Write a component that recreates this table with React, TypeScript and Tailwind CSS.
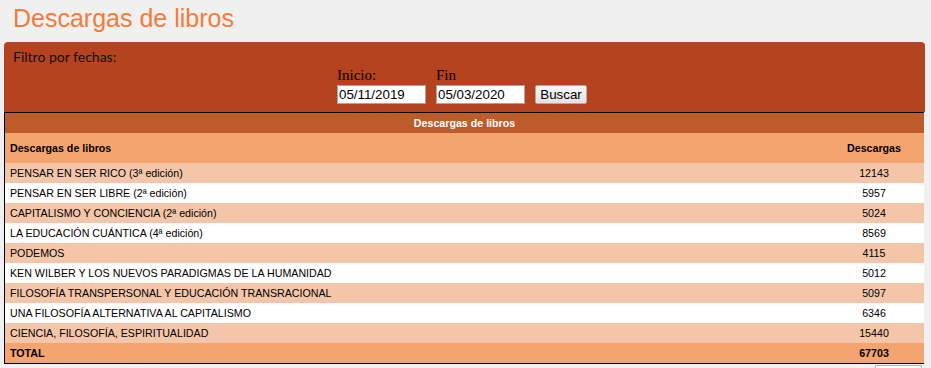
const libros: [string, number][] = [
  ['PENSAR EN SER RICO (3ª edición)', 12143],
  ['PENSAR EN SER LIBRE (2ª edición)', 5957],
  ['CAPITALISMO Y CONCIENCIA (2ª edición)', 5024],
  ['LA EDUCACIÓN CUÁNTICA (4ª edición)', 8569],
  ['PODEMOS', 4115],
  ['KEN WILBER Y LOS NUEVOS PARADIGMAS DE LA HUMANIDAD', 5012],
  ['FILOSOFÍA TRANSPERSONAL Y EDUCACIÓN TRANSRACIONAL', 5097],
  ['UNA FILOSOFÍA ALTERNATIVA AL CAPITALISMO', 6346],
  ['CIENCIA, FILOSOFÍA, ESPIRITUALIDAD', 15440],
];

function FiltroFechas() {
  return (
    <div className="w-[921px] ml-[4px] rounded-t-[4px] bg-[#b5431f] pt-[6px] pb-[8px]">
      <div className="pl-[9px] font-['Lato',sans-serif] text-[14px] leading-[17px] text-[#111]">
        Filtro por fechas:
      </div>
      <div className="mt-[2px] flex items-end justify-center gap-[10px] pr-[5px]">
        <div className="flex flex-col">
          <label className="font-['Liberation_Serif','Times_New_Roman',serif] text-[15px] leading-[17px] text-black">
            Inicio:
          </label>
          <input
            defaultValue="05/11/2019"
            className="mt-[1px] h-[19px] w-[89px] border border-[#a5a5a5] bg-white px-[1px] font-['Liberation_Sans',Arial,sans-serif] text-[13.33px] text-black outline-none"
          />
        </div>
        <div className="flex flex-col">
          <label className="font-['Liberation_Serif','Times_New_Roman',serif] text-[15px] leading-[17px] text-black">
            Fin
          </label>
          <input
            defaultValue="05/03/2020"
            className="mt-[1px] h-[19px] w-[89px] border border-[#a5a5a5] bg-white px-[1px] font-['Liberation_Sans',Arial,sans-serif] text-[13.33px] text-black outline-none"
          />
        </div>
        <button
          type="button"
          className="h-[19px] w-[52px] rounded-[2px] border border-[#adadad] bg-gradient-to-b from-[#f6f6f6] to-[#e3e3e3] font-['Liberation_Sans',Arial,sans-serif] text-[13.33px] leading-none text-black"
        >
          Buscar
        </button>
      </div>
    </div>
  );
}

function TablaDescargas() {
  return (
    <div className="ml-[4px] w-[920px] border-l border-t border-b border-black font-['Liberation_Sans',Arial,sans-serif] text-[10.67px] text-black">
      <table className="w-full border-collapse">
        <thead>
          <tr className="h-[20px] bg-[#bd5c2b]">
            <th colSpan={2} className="p-0 text-center font-bold text-white">
              Descargas de libros
            </th>
          </tr>
          <tr className="h-[30px] bg-[#f4a46f]">
            <th className="p-0 pl-[5px] text-left font-bold">Descargas de libros</th>
            <th className="w-[100px] p-0 text-center font-bold">Descargas</th>
          </tr>
        </thead>
        <tbody>
          {libros.map(([titulo, total], i) => (
            <tr key={titulo} className={i % 2 === 0 ? 'h-[20px] bg-[#f4c5a8]' : 'h-[20px] bg-white'}>
              <td className="p-0 pl-[5px]">{titulo}</td>
              <td className="p-0 text-center">{total}</td>
            </tr>
          ))}
          <tr className="h-[20px] bg-[#f4a46f] font-bold">
            <td className="p-0 pl-[5px]">TOTAL</td>
            <td className="p-0 text-center">67703</td>
          </tr>
        </tbody>
      </table>
    </div>
  );
}

export default function App() {
  return (
    <div className="min-h-screen w-[931px] bg-[#f0f0f0]">
      <h1 className="h-[42px] pl-[13px] pt-[4px] font-['Liberation_Sans',Arial,sans-serif] text-[25px] leading-[28px] text-[#f57b38]">
        Descargas de libros
      </h1>
      <FiltroFechas />
      <TablaDescargas />
      <div className="flex justify-end pr-[9px] pt-[1px]">
        <div className="h-[20px] w-[47px] border border-[#b5b5b5] bg-white" />
      </div>
    </div>
  );
}
